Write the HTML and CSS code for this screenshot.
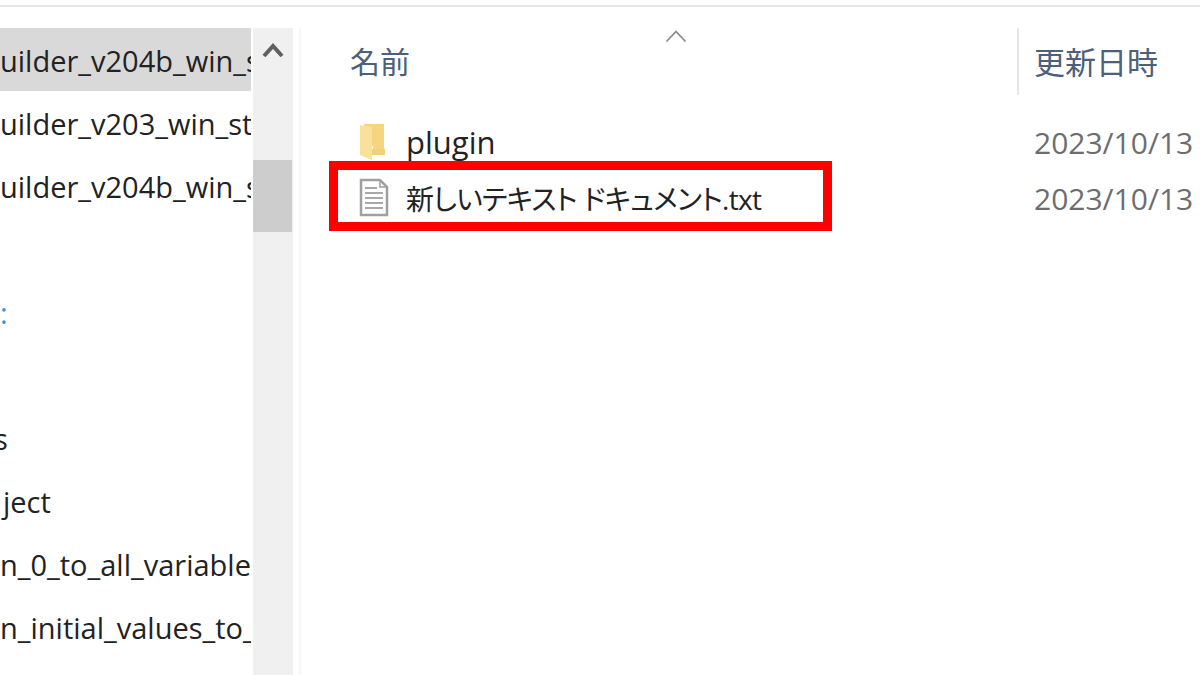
FILE: index.html
```html
<!DOCTYPE html>
<html lang="ja">
<head>
  <meta charset="UTF-8">
  <title>plugin folder</title>
  <link rel="stylesheet" href="styles.css">
</head>
<body>
  <div class="window">
    <!-- Navigation tree, cut off on the left -->
    <div class="tree">
      <div class="tree-row selected">uilder_v204b_win_st</div>
      <div class="tree-row">uilder_v203_win_st</div>
      <div class="tree-row">uilder_v204b_win_st</div>
      <div class="tree-row"></div>
      <div class="tree-row link">:</div>
      <div class="tree-row"></div>
      <div class="tree-row cut">s</div>
      <div class="tree-row shift">ject</div>
      <div class="tree-row">n_0_to_all_variables</div>
      <div class="tree-row">n_initial_values_to_</div>
    </div>

    <div class="scrollbar">
      <svg class="scroll-up" width="22" height="16" viewBox="0 0 22 16">
        <path d="M2 14 L11 4 L20 14" fill="none" stroke="#606060" stroke-width="4"/>
      </svg>
      <div class="scroll-thumb"></div>
    </div>

    <div class="files">
      <svg class="sort-arrow" width="22" height="14" viewBox="0 0 22 14">
        <path d="M1.5 12.5 L11 2.5 L20.5 12.5" fill="none" stroke="#8a8a8a" stroke-width="1.8"/>
      </svg>
      <div class="file-header">
        <div class="col-name header-name">名前</div>
        <div class="col-date">更新日時</div>
      </div>
      <div class="file-row">
        <div class="col-name">
          <svg class="file-icon" width="30" height="40" viewBox="0 0 30 40">
            <path d="M5 2 H25 V31 H14 V24 H5 Z" fill="#f5d67f"/>
            <path d="M1 3 L13 5 V38 L1 33 Z" fill="#f9e19c"/>
            <path d="M13 27 H26 V33 H13 Z" fill="#f2d074"/>
          </svg>
          <span class="folder-title">plugin</span>
        </div>
        <div class="col-date date-text">2023/10/13</div>
      </div>
      <div class="file-row">
        <div class="col-name marked">
          <svg class="file-icon" width="30" height="40" viewBox="0 0 30 40">
            <path d="M2 2 H21 L28 9 V37 H2 Z" fill="#fff" stroke="#a0a0a0" stroke-width="2.5"/>
            <path d="M21 2 V9 H28" fill="none" stroke="#a0a0a0" stroke-width="1.5"/>
            <path d="M6 10 H18 M6 15 H24 M6 20 H24 M6 25 H24 M6 30 H24" stroke="#a8a8a8" stroke-width="2"/>
          </svg>
          <span class="file-title">新しいテキスト ドキュメント.txt</span>
        </div>
        <div class="col-date date-text">2023/10/13</div>
      </div>
    </div>
  </div>
</body>
</html>
```

FILE: styles.css
```css
html, body {
  margin: 0;
  height: 100%;
  overflow: hidden;
}
body {
  background: #fff;
  font-family: "Open Sans", "Noto Sans CJK JP", sans-serif;
  font-size: 30px;
  color: #222;
}
.window {
  height: 670px;
  box-sizing: border-box;
  border-top: 2px solid #e6e6e6;
  margin-top: 5px;
  padding-top: 21px;
  display: flex;
}
.tree {
  width: 251px;
  overflow: hidden;
  margin-right: 2px;
  font-size: 29px;
}
.tree-row {
  height: 63px;
  line-height: 65px;
  white-space: nowrap;
  overflow: hidden;
}
.tree-row.selected {
  background: #d9d9d9;
}
.tree-row.link {
  color: #3a8ee6;
}
.tree-row.cut {
  text-indent: -6px;
}
.tree-row.shift {
  text-indent: 3px;
}
.scrollbar {
  width: 40px;
  background: #f0f0f0;
  position: relative;
  border-right: 6px solid #fff;
}
.scroll-up {
  position: absolute;
  left: 9px;
  top: 14px;
}
.scroll-thumb {
  position: absolute;
  top: 132px;
  left: 0;
  width: 39px;
  height: 72px;
  background: #cdcdcd;
}
.files {
  flex: 1;
  position: relative;
  border-left: 2px solid #f7f7f7;
  padding-left: 49px;
}
.sort-arrow {
  position: absolute;
  left: 364px;
  top: 1px;
}
.file-header {
  height: 67px;
  display: flex;
  align-items: center;
  color: #4c607a;
  margin-bottom: 19px;
}
.header-name {
  padding-bottom: 3px;
}
.file-header .col-date {
  border-left: 2px solid #e6e6e6;
  height: 67px;
  line-height: 68px;
  padding-left: 15px;
  font-size: 31px;
}
.file-row {
  height: 56px;
  display: flex;
  align-items: center;
}
.col-name {
  width: 667px;
  flex-shrink: 0;
  display: flex;
  align-items: center;
  gap: 17px;
  white-space: nowrap;
}
.file-icon {
  margin-left: 9px;
}
.folder-title {
  font-size: 31px;
}
.file-title {
  font-size: 28px;
  letter-spacing: -0.7px;
  font-feature-settings: "palt";
}
.marked {
  position: relative;
}
.marked::after {
  content: "";
  position: absolute;
  left: -21px;
  top: -17px;
  width: 503px;
  height: 70px;
  box-sizing: border-box;
  border: 9px solid #fe0000;
}
.col-date {
  white-space: nowrap;
}
.date-text {
  padding-left: 17px;
  color: #6d6d6d;
}
```
